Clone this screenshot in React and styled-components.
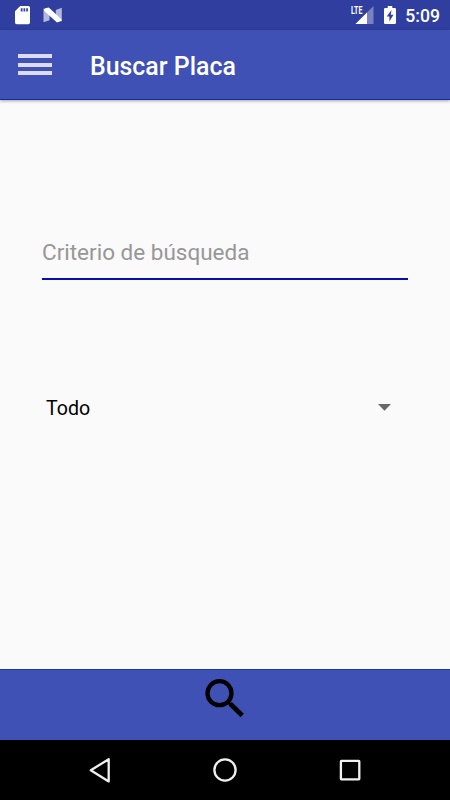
import React from 'react';
import styled, { createGlobalStyle } from 'styled-components';

const App = () => {
  return (
    <>
      <GlobalStyle />
      <Screen>
        <StatusBar>
          <svg width="64" height="30" viewBox="0 0 64 30">
            <path fill="#fff" d="M20.2 6h8.3a1.5 1.5 0 0 1 1.5 1.5v15a1.7 1.7 0 0 1-1.7 1.7H16.7a1.7 1.7 0 0 1-1.7-1.7V11.2z" />
            <path fill="#303f9f" d="M20.8 8.2h1.7v3.4h-1.7zM23.5 8.2h1.7v3.4h-1.7zM26.2 8.2h1.7v3.4h-1.7z" />
            <path fill="#b3b9de" d="M43.5 8.5l6 5.5v6.2l-6 2zM61.8 7.8v13.6l-6-5.2V10z" />
            <path fill="#fff" d="M44 9.8Q44 8.4 45.2 8.2L48.8 7.5 61.6 19.4Q61.9 20.8 60.6 21.3L57 22.4 44 10.8z" />
          </svg>
          <StatusRight>
            <Signal>
              <Network>LTE</Network>
              <svg width="24" height="30" viewBox="0 0 24 30">
                <path fill="#7882c1" d="M23.5 6v18H5.5z" />
                <path fill="#fff" d="M17 12.5V24H5.5z" />
              </svg>
            </Signal>
            <svg width="12" height="30" viewBox="0 0 12 30">
              <path fill="#fff" d="M3.7 6h4.6v2h2.5q1.2 0 1.2 1.2v13.6q0 1.2-1.2 1.2H1.2Q0 24 0 22.8V9.2Q0 8 1.2 8h2.5z" />
              <path fill="#303f9f" d="M7.5 10L2.7 16.6h2.7V21.5l4.1-6.8H6.8z" />
            </svg>
            <Clock>5:09</Clock>
          </StatusRight>
        </StatusBar>
        <Toolbar>
          <MenuButton aria-label="Menu">
            <span />
            <span />
            <span />
          </MenuButton>
          <Title>Buscar Placa</Title>
        </Toolbar>
        <Content>
          <SearchInput placeholder="Criterio de búsqueda" />
          <Spinner>
            <span>Todo</span>
            <svg width="13" height="7" viewBox="0 0 13 7">
              <path fill="#686868" d="M0 0h13L6.5 6.7z" />
            </svg>
          </Spinner>
        </Content>
        <SearchBar aria-label="Buscar">
          <svg width="44" height="44" viewBox="0 0 44 44" fill="none" stroke="#000">
            <circle cx="16.5" cy="16.2" r="12" strokeWidth="4.3" />
            <path d="M27.2 26.8L39.2 38.4" strokeWidth="4.8" />
            <path d="M24 24l4 4" strokeWidth="2.6" />
          </svg>
        </SearchBar>
        <NavBar>
          <svg width="24" height="28" viewBox="0 0 24 28">
            <path d="M20.7 3.2v22.2L2.8 14.3z" />
          </svg>
          <svg width="26" height="28" viewBox="0 0 26 28">
            <circle cx="13" cy="14" r="10.6" />
          </svg>
          <svg width="24" height="28" viewBox="0 0 24 28">
            <rect x="2.9" y="4.9" width="18.4" height="18.4" rx="0.5" />
          </svg>
        </NavBar>
      </Screen>
    </>
  );
};

const GlobalStyle = createGlobalStyle`
  * {
    box-sizing: border-box;
  }

  body {
    margin: 0;
    font-family: Roboto, sans-serif;
  }

  svg {
    display: block;
    flex-shrink: 0;
  }
`;

const Screen = styled.div`
  display: flex;
  flex-direction: column;
  width: 450px;
  height: 800px;
  background: #fafafa;
  overflow: hidden;
`;

const StatusBar = styled.div`
  display: flex;
  justify-content: space-between;
  height: 30px;
  flex-shrink: 0;
  padding-right: 10px;
  background: #303f9f;
`;

const StatusRight = styled.div`
  display: flex;
  align-items: center;
`;

const Signal = styled.div`
  position: relative;
  margin-right: 10px;
`;

const Network = styled.span`
  position: absolute;
  left: 1px;
  top: 5px;
  font-size: 11px;
  line-height: 11px;
  font-weight: 700;
  color: #fff;
  transform: scaleX(0.64);
  transform-origin: left;
`;

const Clock = styled.span`
  margin-left: 9.4px;
  padding-top: 1px;
  font-size: 17.6px;
  font-weight: 500;
  color: #fff;
`;

const Toolbar = styled.header`
  display: flex;
  align-items: center;
  height: 70px;
  flex-shrink: 0;
  padding: 0 18px;
  background: #3f51b5;
  border-bottom: 1px solid #0c2da5;
  box-shadow: 0 1px 3px rgba(0, 0, 0, 0.35);
`;

const MenuButton = styled.button`
  display: flex;
  flex-direction: column;
  gap: 4.3px;
  width: 34px;
  padding: 0;
  border: none;
  background: none;

  span {
    height: 4px;
    background: #dcdcf4;
  }
`;

const Title = styled.h1`
  margin: 5px 0 0 38px;
  font-size: 24.9px;
  line-height: 30px;
  font-weight: 500;
  color: #fff;
`;

const Content = styled.main`
  flex: 1;
  padding: 130px 42px 0;
`;

const SearchInput = styled.input`
  display: block;
  width: 100%;
  height: 50px;
  padding: 0 0 5px;
  border: none;
  border-bottom: 2px solid #0710a8;
  border-radius: 0;
  outline: none;
  background: none;
  font-family: inherit;
  font-size: 22.5px;
  color: #000;

  &::placeholder {
    color: #979797;
    opacity: 1;
  }
`;

const Spinner = styled.div`
  display: flex;
  align-items: center;
  justify-content: space-between;
  height: 40px;
  margin-top: 107px;
  padding: 0 17px 0 4px;
  font-size: 19.6px;
  color: #000;

  span {
    padding-top: 2px;
  }
`;

const SearchBar = styled.button`
  display: flex;
  justify-content: center;
  height: 71px;
  flex-shrink: 0;
  padding: 7px 0 0;
  border: none;
  border-top: 1px solid #1c37a7;
  background: #3f51b5;
`;

const NavBar = styled.nav`
  display: flex;
  align-items: center;
  justify-content: space-between;
  height: 60px;
  flex-shrink: 0;
  padding: 0 88px;
  background: #000;

  svg {
    fill: none;
    stroke: #f0f0f0;
    stroke-width: 2.3;
    stroke-linejoin: round;
  }
`;

export default App;
